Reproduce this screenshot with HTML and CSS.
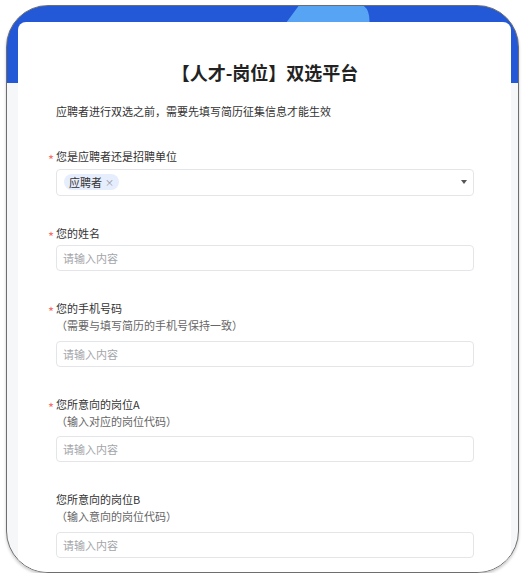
FILE: index.html
```html
<!DOCTYPE html>
<html lang="zh-CN">
<head>
<meta charset="utf-8">
<title>【人才-岗位】双选平台</title>
<link rel="stylesheet" href="styles.css">
</head>
<body>
<div class="device">
  <svg class="banner-deco" viewBox="0 0 511 80" width="511" height="80" aria-hidden="true">
    <path d="M279 17 L293 -2 L352 -2 Q363 0 362.5 17 L362 60 L279 60 Z" fill="#58a4f4"/>
  </svg>
  <main class="card">
    <h1 class="title">【人才-岗位】双选平台</h1>
    <p class="intro">应聘者进行双选之前，需要先填写简历征集信息才能生效</p>
    <form class="form">
      <div class="field">
        <div class="label-group">
          <div class="label"><span class="star">*</span>您是应聘者还是招聘单位</div>
        </div>
        <div class="control select">
          <span class="tag">应聘者<span class="tag-close">×</span></span>
          <span class="caret"></span>
        </div>
      </div>
      <div class="field">
        <div class="label-group">
          <div class="label"><span class="star">*</span>您的姓名</div>
        </div>
        <div class="control input"><span class="placeholder">请输入内容</span></div>
      </div>
      <div class="field">
        <div class="label-group has-hint">
          <div class="label"><span class="star">*</span>您的手机号码</div>
          <div class="hint">（需要与填写简历的手机号保持一致）</div>
        </div>
        <div class="control input"><span class="placeholder">请输入内容</span></div>
      </div>
      <div class="field">
        <div class="label-group has-hint">
          <div class="label"><span class="star">*</span>您所意向的岗位A</div>
          <div class="hint">（输入对应的岗位代码）</div>
        </div>
        <div class="control input"><span class="placeholder">请输入内容</span></div>
      </div>
      <div class="field">
        <div class="label-group has-hint">
          <div class="label">您所意向的岗位B</div>
          <div class="hint">（输入意向的岗位代码）</div>
        </div>
        <div class="control input"><span class="placeholder">请输入内容</span></div>
      </div>
    </form>
  </main>
</div>
</body>
</html>
```

FILE: styles.css
```css
html, body {
  margin: 0;
  padding: 0;
  background: #ffffff;
}

body {
  font-family: "Noto Sans CJK SC", "Noto Sans", sans-serif;
  color: #333333;
}

.device {
  position: relative;
  box-sizing: border-box;
  width: 513px;
  height: 568px;
  margin: 5px 0 0 6px;
  border: 1px solid #6e6e6e;
  border-radius: 42px;
  overflow: hidden;
  background: linear-gradient(#2359d7 0, #2359d7 77px, #f6f7f9 77px, #f6f7f9 100%);
  box-shadow: 0 2px 3px rgba(0, 0, 0, 0.22);
  display: flex;
  flex-direction: column;
}

.banner-deco {
  position: absolute;
  top: 0;
  left: 0;
  display: block;
}

.card {
  position: relative;
  flex: 1;
  margin: 16px 7px 0 11px;
  padding: 37px 37px 0 38px;
  background: #ffffff;
  border-radius: 8px 8px 0 0;
}

.title {
  margin: 0;
  text-align: center;
  font-size: 18px;
  line-height: 26px;
  font-weight: 700;
  color: #222222;
}

.intro {
  margin: 18px 0 0;
  font-size: 11px;
  line-height: 17px;
  color: #333333;
}

.form {
  margin-top: 28px;
}

.field + .field {
  margin-top: 29px;
}

.label-group {
  margin-bottom: 3.5px;
}

.label-group.has-hint {
  padding-bottom: 3px;
}

.label,
.hint {
  font-size: 11px;
  line-height: 17px;
  height: 17px;
}

.label {
  color: #333333;
}

.hint {
  color: #666666;
}

.star {
  display: inline-block;
  vertical-align: top;
  width: 8px;
  height: 17px;
  margin-left: -8px;
  color: #f5706c;
  font-size: 13px;
  line-height: 23px;
}

.control {
  box-sizing: border-box;
  display: flex;
  align-items: center;
  background: #ffffff;
  border: 1px solid #e3e5e9;
  border-radius: 4px;
}

.input {
  height: 26px;
  padding: 0 6px;
}

.select {
  height: 27px;
  padding: 0 6px 0 7px;
}

.placeholder {
  font-size: 11px;
  color: #a3a6ab;
}

.tag {
  display: inline-flex;
  align-items: center;
  height: 16px;
  padding: 0 5px 0 5px;
  border-radius: 8px;
  background: #e6edfc;
  font-size: 11px;
  color: #333333;
}

.tag-close {
  margin-left: 3px;
  font-size: 9px;
  color: #8a8f99;
}

.caret {
  margin-left: auto;
  width: 0;
  height: 0;
  border-left: 3px solid transparent;
  border-right: 3px solid transparent;
  border-top: 4px solid #555555;
}
```
